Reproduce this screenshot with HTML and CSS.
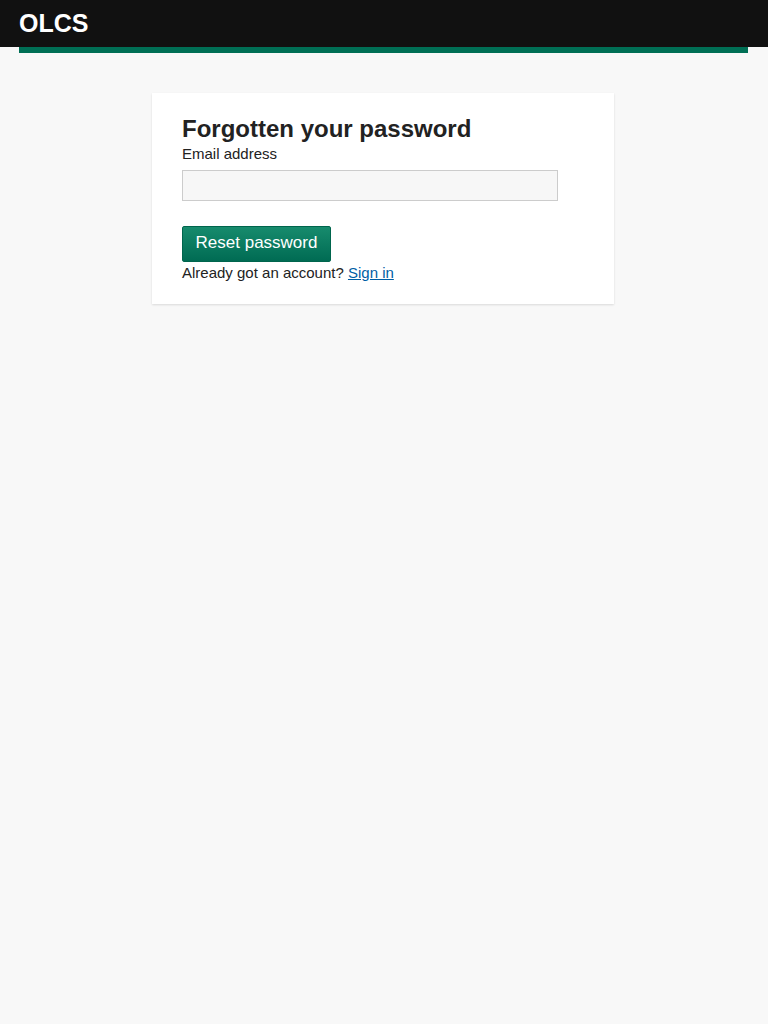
FILE: index.html
```html
<!DOCTYPE html>
<html lang="en">
<head>
<meta charset="utf-8">
<title>Forgotten your password - OLCS</title>
<link rel="stylesheet" href="styles.css">
</head>
<body>
<header class="site-header">
  <div class="brand">OLCS</div>
</header>
<div class="header-rule"></div>
<main class="page">
  <section class="card">
    <h1 class="card-title">Forgotten your password</h1>
    <form class="form">
      <label class="field-label" for="email">Email address</label>
      <input class="field-input" id="email" type="email">
      <button class="btn-primary" type="button">Reset password</button>
    </form>
    <p class="account-text">Already got an account? <a class="link" href="#">Sign in</a></p>
  </section>
</main>
</body>
</html>
```

FILE: styles.css
```css
* { box-sizing: border-box; }
html, body { margin: 0; padding: 0; }
body {
  background: #f8f8f8;
  font-family: "Liberation Sans", Arial, Helvetica, sans-serif;
  color: #222;
  min-height: 1024px;
}
.site-header {
  background: #111111;
  height: 47px;
  padding-left: 19px;
  display: flex;
  align-items: center;
}
.brand {
  color: #fff;
  font-weight: bold;
  font-size: 25px;
  line-height: 30px;
  margin-top: -1px;
}
.header-rule {
  height: 6px;
  background: #006f55;
  margin: 0 20px 0 19px;
}
.page {
  padding-top: 40px;
}
.card {
  width: 462px;
  margin-left: 152px;
  background: #fff;
  padding: 20px 30px 21px;
  box-shadow: 0 1px 2px rgba(0,0,0,0.12);
}
.card-title {
  margin: 0;
  font-size: 24px;
  line-height: 32px;
  font-weight: bold;
  color: #222;
}
.form {
  display: flex;
  flex-direction: column;
  align-items: flex-start;
}
.field-label {
  font-size: 15px;
  line-height: 20px;
  margin-top: -1px;
}
.field-input {
  width: 376px;
  height: 31px;
  margin: 6px 0 25px;
  background: #f7f7f7;
  border: 1px solid #cccccc;
  border-radius: 0;
  font: inherit;
}
.btn-primary {
  height: 36px;
  width: 149px;
  padding: 0;
  border: 1px solid #00654d;
  border-radius: 2px;
  background: linear-gradient(#178b6d, #006b53);
  color: #fff;
  font-family: inherit;
  font-size: 17px;
  line-height: 20px;
  padding-bottom: 3px;
}
.account-text {
  margin: 1px 0 0;
  font-size: 15px;
  line-height: 20px;
}
.link {
  color: #005ea5;
  text-decoration: underline;
}
```
